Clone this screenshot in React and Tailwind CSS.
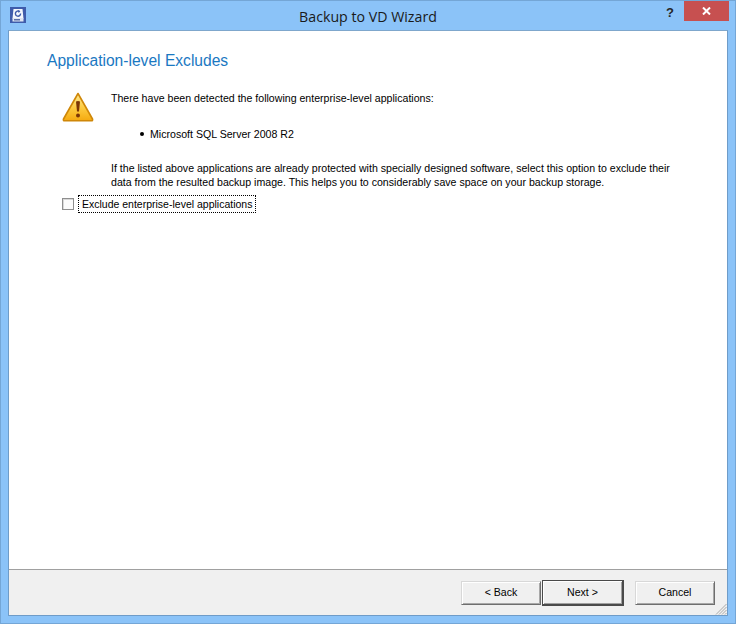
import React from 'react'

const AppIcon = () => (
    <svg width="16" height="16" viewBox="0 0 16 16" className="block">
        <rect x="0" y="0" width="16" height="16" fill="#3f5cab" />
        <path d="M3.5 2h9l1 9.5h-11z" fill="#f4f7fc" />
        <rect x="2.5" y="11" width="11" height="3.5" fill="#dfe5f2" />
        <rect x="4" y="12" width="6" height="1.5" fill="#5a6fa8" />
        <path d="M10.6 6.6a2.6 2.6 0 1 1-1.2-2.2" fill="none" stroke="#3f5cab" strokeWidth="1.4" />
        <path d="M8 3l2.4 1.2L8.6 6z" fill="#3f5cab" />
    </svg>
)

const WarningIcon = () => (
    <svg width="32" height="30" viewBox="0 0 32 30" className="block">
        <defs>
            <linearGradient id="warnFill" x1="0" y1="0" x2="0" y2="1">
                <stop offset="0" stopColor="#ffeb94" />
                <stop offset="0.55" stopColor="#fdc93c" />
                <stop offset="1" stopColor="#f5a90f" />
            </linearGradient>
        </defs>
        <path d="M16 1.5 L30.5 27 Q31 28.8 29.5 28.8 L2.5 28.8 Q1 28.8 1.5 27 Z" fill="url(#warnFill)" stroke="#cf8708" strokeWidth="1.6" strokeLinejoin="round" />
        <path d="M14 9.5 Q16 8.5 18 9.5 L17 19.5 L15 19.5 Z" fill="#7c3606" />
        <circle cx="16" cy="23.5" r="2" fill="#7c3606" />
    </svg>
)

const GripIcon = () => (
    <svg width="12" height="12" viewBox="0 0 12 12" className="block">
        <path d="M11.5 1 L1 11.5 M11.5 4 L4 11.5 M11.5 7 L7 11.5 M11.5 10 L10 11.5" stroke="#a8a8a8" strokeWidth="1" fill="none" />
    </svg>
)

const WizardButton = ({ label, isDefault }) => (
    <button
        className={
            isDefault
                ? "w-[82px] h-[26px] pt-[1px] bg-[#f0f0f0] border border-[#4a4a4a] border-r-2 border-b-2 text-[10.6px] text-black shadow-[inset_1px_1px_0_#ffffff,inset_-1px_-1px_0_#a0a0a0]"
                : "w-[80px] h-[24px] pt-[1px] bg-[#f0f0f0] border border-[#d8d8d8] border-r-[#6e6e6e] border-b-[#6e6e6e] text-[10.6px] text-black shadow-[inset_1px_1px_0_#ffffff,inset_-1px_-1px_0_#a8a8a8]"
        }
    >
        {label}
    </button>
)

export default function App() {
    return (
        <div className="w-[736px] h-[624px] flex flex-col bg-[#8bc3f8] border border-[#74a6d6] font-['Liberation_Sans',sans-serif] overflow-hidden">
            {/* title bar */}
            <div className="relative h-[29px] shrink-0 flex items-center justify-center">
                <div className="absolute left-[9px] top-[6px]">
                    <AppIcon />
                </div>
                <span className="font-['Open_Sans',sans-serif] text-[14.2px] text-[#1a1a1a] pt-[2px]">Backup to VD Wizard</span>
                <span className="absolute left-[665px] top-[2px] font-bold text-[13px] text-[#262626]">?</span>
                <div className="absolute left-[683px] top-0 w-[45px] h-[20px] bg-[#c75050] flex items-center justify-center">
                    <svg width="9" height="8" viewBox="0 0 9 8">
                        <path d="M1 .5 L8 7.5 M8 .5 L1 7.5" stroke="#ffffff" strokeWidth="2" fill="none" />
                    </svg>
                </div>
            </div>

            {/* client area */}
            <div className="ml-[7px] mr-[7px] mb-[7px] flex-1 flex flex-col border border-[#6f9cc8] border-t-[#7fa7cc] bg-white">
                <div className="flex-1 pl-[38px] pr-[20px] pt-[20px] text-[10.6px] leading-[14px] text-black">
                    <h1 className="text-[15.6px] leading-[20px] text-[#1a78c2]">Application-level Excludes</h1>
                    <div className="flex mt-[20px] pl-[15px]">
                        <div className="w-[49px] shrink-0 pt-[1px]">
                            <WarningIcon />
                        </div>
                        <div>
                            <p>There have been detected the following enterprise-level applications:</p>
                            <div className="flex items-center mt-[22px] pl-[29px]">
                                <span className="w-[4px] h-[4px] rounded-full bg-black mr-[6px]"></span>
                                <span>Microsoft SQL Server 2008 R2</span>
                            </div>
                            <p className="mt-[20px] whitespace-nowrap">
                                If the listed above applications are already protected with specially designed software, select this option to exclude their
                                <br />
                                data from the resulted backup image. This helps you to considerably save space on your backup storage.
                            </p>
                        </div>
                    </div>
                    <div className="flex items-center mt-[6px] pl-[15px]">
                        <span className="w-[12px] h-[12px] bg-[#fbfbfb] border border-[#8e8e8e] shadow-[inset_1px_1px_0_#d8d8d8]"></span>
                        <span className="ml-[4px] px-[3px] h-[18px] flex items-center border border-dotted border-black text-[10.5px]">Exclude enterprise-level applications</span>
                    </div>
                </div>

                {/* footer */}
                <div className="relative h-[46px] shrink-0 bg-[#f0f0f0] border-t border-[#a0a0a0] flex items-center justify-end pr-[12px]">
                    <WizardButton label="< Back" />
                    <span className="w-[1px]"></span>
                    <WizardButton label="Next >" isDefault />
                    <span className="w-[11px]"></span>
                    <WizardButton label="Cancel" />
                    <div className="absolute right-0 bottom-0">
                        <GripIcon />
                    </div>
                </div>
            </div>
        </div>
    )
}
